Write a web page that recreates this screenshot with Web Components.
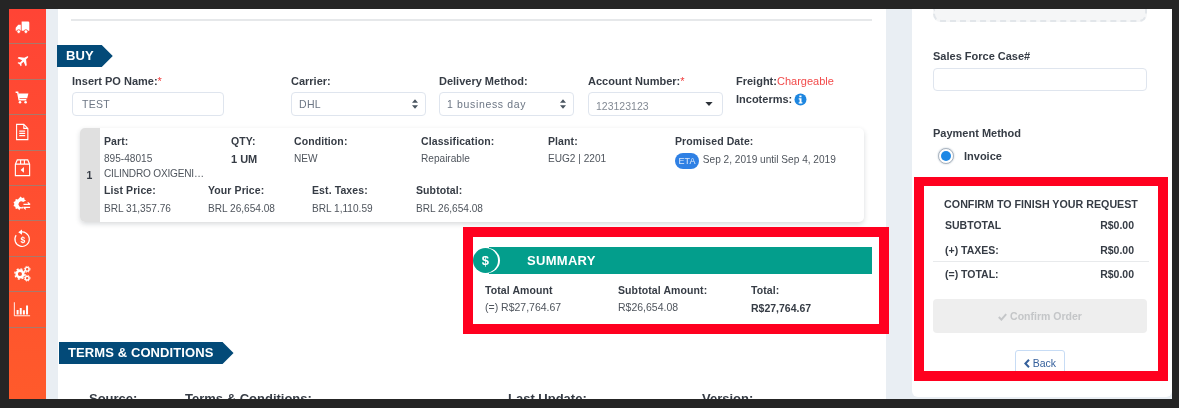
<!DOCTYPE html>
<html lang="en">
<head>
<meta charset="utf-8">
<title>Buy</title>
<style>
  html, body { margin: 0; height: 408px; overflow: hidden; background: #252525; }
  body { font: 11px "Liberation Sans", Arial, sans-serif; color: #363c45; }
</style>
</head>
<body>
<order-app>
  <nav-rail slot="rail"></nav-rail>
  <div slot="main">
    <section-ribbon style="--ribbon-top:24px;--ribbon-left:-14px;--ribbon-pad:19px">BUY</section-ribbon>
    <buy-form></buy-form>
    <part-card></part-card>
    <summary-box></summary-box>
    <section-ribbon style="--ribbon-top:8px;--ribbon-left:-12px;--ribbon-pad:20px">TERMS &amp; CONDITIONS</section-ribbon>
    <terms-table></terms-table>
  </div>
  <order-aside slot="aside"></order-aside>
</order-app>

<script>
class OrderApp extends HTMLElement {
  constructor() {
    super();
    this.attachShadow({ mode: 'open' }).innerHTML = `
      <style>
        :host { display: block; margin: 9px 7px 0 9px; height: 390px; overflow: hidden; background: #e9eef3; filter: blur(.35px); }
        .shell { display: flex; height: 100%; }
        .rail { flex: 0 0 37px; }
        .main { flex: 0 0 815px; min-width: 0; margin-left: 12px; padding-left: 13px; background: #fff; }
        .rule { width: 801px; height: 2px; margin-top: 10px; background: #e6e8ea; }
        .aside { flex: 1; margin-left: 26px; margin-bottom: 2px; background: #fff; border-radius: 0 0 6px 6px; }
      </style>
      <div class="shell">
        <div class="rail"><slot name="rail"></slot></div>
        <div class="main"><div class="rule"></div><slot name="main"></slot></div>
        <div class="aside"><slot name="aside"></slot></div>
      </div>`;
  }
}

const RAIL_ICONS = [
  // truck, cab on the left
  { size: 17, d: '<g transform="matrix(-1 0 0 1 20 0)"><path fill="#fff" d="M2 5.500A1.500 1.500 0 0 1 3.500 4H11v11H2zM12 8h3l3 3.500V15h-6z"/><circle cx="6" cy="16" r="2.200" fill="#fff" stroke="#ff4733"/><circle cx="14.500" cy="16" r="2.200" fill="#fff" stroke="#ff4733"/></g>' },
  // plane
  { size: 14, d: '<path fill="#fff" d="M17 2.200c1-.9 2.300-.6 1.800.8-.3.8-1 1.500-3 3.500l1 8-1.600 1.600-2.900-6.600-3.200 3.100.3 2.400-1.200 1.200-1.600-3-3-1.600 1.200-1.200 2.400.3 3.100-3.200-6.600-2.900L5.300 2.800l8 1z"/>' },
  // cart
  { size: 16, d: '<path fill="none" stroke="#fff" stroke-width="1.800" d="M2 4h2.600l1.800 9.500h9"/><path fill="#fff" d="M5.500 5.500H18l-1.500 6H6.500z"/><circle cx="7.500" cy="16.500" r="1.600" fill="#fff"/><circle cx="14.500" cy="16.500" r="1.600" fill="#fff"/>' },
  // document
  { size: 18, d: '<path fill="none" stroke="#fff" stroke-width="1.200" d="M4 1.500h8l4.500 4.500v12.500H4zM12 1.500V6h4.500"/><path stroke="#fff" stroke-width="1.200" d="M7 9h6.500M7 11.500h6.500M7 14h6.500"/>' },
  // box with return arrow
  { size: 19, d: '<path fill="none" stroke="#fff" stroke-width="1.200" d="M2.500 6.500 4.500 2h11l2 4.500v12h-15zM2.500 6.500h15M8 2v4.500M12 2v4.500"/><path fill="#fff" d="M11.500 9.500v6L8 12.500z"/>' },
  // gear with swap arrows
  { size: 19, d: '<path fill="#fff" d="M8 2.500l1.500 1.700 2.200-.4.500 2.200 1.500.9-3 1.600a3 3 0 1 0 0 4.600l-.6 2.400-2.100-.4L6.600 17l-1.500-1.700-2.200.4-.5-2.200L.5 12.500l1-2-1-2 1.900-1 .5-2.200 2.200.4z"/><path fill="none" stroke="#fff" stroke-width="1.300" d="M11 11h7M15.500 8.800 18 11M18 14h-7M13.500 16.200 11 14"/>' },
  // refresh dollar
  { size: 19, d: '<path fill="none" stroke="#fff" stroke-width="1.200" d="M7 3.600A7.600 7.600 0 1 1 3.300 6.500"/><path fill="#fff" d="M9.500.5v5.500L5.500 3.500z"/><text x="10.500" y="14.500" fill="#fff" font-size="9" font-weight="700" text-anchor="middle" font-family="Liberation Sans">$</text>' },
  // gears
  { size: 17, d: '<circle cx="7" cy="10.500" r="3.900" fill="none" stroke="#fff" stroke-width="3"/><circle cx="7" cy="10.500" r="6" fill="none" stroke="#fff" stroke-width="1.600" stroke-dasharray="2.400 2.300"/><circle cx="15.500" cy="5" r="2.200" fill="none" stroke="#fff" stroke-width="1.600"/><circle cx="15.500" cy="5" r="3.400" fill="none" stroke="#fff" stroke-width="1.100" stroke-dasharray="1.500 1.200"/><circle cx="15.500" cy="15.500" r="2.200" fill="none" stroke="#fff" stroke-width="1.600"/><circle cx="15.500" cy="15.500" r="3.400" fill="none" stroke="#fff" stroke-width="1.100" stroke-dasharray="1.500 1.200"/>' },
  // bar chart
  { size: 18, d: '<path fill="none" stroke="#fff" stroke-width="1" d="M1.500 2.500v15h17.500"/><path fill="#fff" d="M4 11h2.200v5H4zM7.500 9h2.200v7H7.500zM11 11.500h2.200V16H11zM14.500 6h2.200v10h-2.200z"/>' }
];

class NavRail extends HTMLElement {
  constructor() {
    super();
    const items = RAIL_ICONS.map(icon => `<div class="item"><svg width="${icon.size}" height="${icon.size}" viewBox="0 0 20 20">${icon.d}</svg></div>`).join('');
    this.attachShadow({ mode: 'open' }).innerHTML = `
      <style>
        :host { display: block; height: 390px; overflow: hidden; background: linear-gradient(#ff4435, #ff5a2b); }
        .item { display: flex; align-items: center; justify-content: center; height: 34.4px; border-bottom: 1px solid #a9796b; padding-right: 11px; }
        .item:first-child { height: 29.5px; }
      </style>
      ${items}`;
  }
}

class SectionRibbon extends HTMLElement {
  constructor() {
    super();
    this.attachShadow({ mode: 'open' }).innerHTML = `
      <style>
        :host { display: block; width: fit-content; margin: var(--ribbon-top, 0) 0 0 var(--ribbon-left, 0); }
        .tag {
          height: 22px; padding: 0 var(--ribbon-pad, 19px) 0 9px;
          font: 700 13px/22px "Liberation Sans", Arial, sans-serif; letter-spacing: .1px; color: #fff;
          background: #034a78;
          clip-path: polygon(0 0, calc(100% - 11px) 0, 100% 50%, calc(100% - 11px) 100%, 0 100%);
        }
      </style>
      <div class="tag"><slot></slot></div>`;
  }
}

class FormField extends HTMLElement {
  constructor() {
    super();
    const required = this.hasAttribute('required') ? '<i>*</i>' : '';
    const arrow = {
      select: '<svg class="arrow" width="6" height="10" viewBox="0 0 7 11"><path fill="#4a5560" d="M3.500 0 7 4H0zM3.500 11 0 7h7z"/></svg>',
      combo: '<svg class="arrow combo" width="8" height="4" viewBox="0 0 9 5"><path fill="#2c3138" d="M0 0h9L4.500 5z"/></svg>'
    }[this.getAttribute('kind')] || '';
    this.attachShadow({ mode: 'open' }).innerHTML = `
      <style>
        :host { display: block; }
        .label { font-weight: 700; font-size: 11px; line-height: 13px; }
        i { color: #f03b3b; font-style: normal; font-weight: 400; }
        .box {
          display: flex; align-items: center; justify-content: space-between; box-sizing: border-box;
          width: var(--field-width, 135px); height: 24px; margin-top: 4px; padding: 0 7px;
          background: #fff; border: 1px solid #dfe5ee; border-radius: 4px;
          color: #6c7684; font-size: 10.5px; letter-spacing: var(--field-spacing, .3px);
        }
        .combo { margin-right: 2px; }
        :host([kind="combo"]) .text { position: relative; top: 2px; color: #838a94; }
        :host([kind="text"]) .box { padding-left: 9px; }
      </style>
      <div class="label">${this.getAttribute('label')}${required}</div>
      <div class="box"><span class="text"><slot></slot></span>${arrow}</div>`;
  }
}

class BuyForm extends HTMLElement {
  constructor() {
    super();
    this.attachShadow({ mode: 'open' }).innerHTML = `
      <style>
        :host { display: grid; grid-template-columns: 219px 148px 149px 148px 1fr; margin: 8px 0 0 1px; height: 48px; }
        .freight { line-height: 13px; font-weight: 700; font-size: 11px; }
        .freight span { color: #f24a4a; font-weight: 400; }
        .inco { display: flex; align-items: center; gap: 2px; margin-top: 5px; }
      </style>
      <form-field label="Insert PO Name:" required kind="text" style="--field-width:152px">TEST</form-field>
      <form-field label="Carrier:" kind="select">DHL</form-field>
      <form-field label="Delivery Method:" kind="select" style="--field-spacing:.65px">1 business day</form-field>
      <form-field label="Account Number:" required kind="combo" style="--field-spacing:0">123123123</form-field>
      <div class="freight">
        <div>Freight:<span>Chargeable</span></div>
        <div class="inco">Incoterms:<svg width="13" height="13" viewBox="0 0 13 13"><circle cx="6.500" cy="6.500" r="6" fill="#1d86e0"/><path fill="#fff" d="M5.300 2.400h2.200v1.800H5.300zM4.700 5.300h2.800v3.900h.9v1.300H4.700V9.200h.9V6.600h-.9z"/></svg></div>
      </div>`;
  }
}

class PartCard extends HTMLElement {
  constructor() {
    super();
    this.attachShadow({ mode: 'open' }).innerHTML = `
      <style>
        :host {
          display: flex; width: 784px; height: 94px; margin: 5px 0 0 9px;
          background: #fff; border-radius: 5px; box-shadow: 0 2px 5px rgba(40,50,60,.18);
          font-size: 10.1px; line-height: 13px; color: #4f555d;
        }
        .index { flex: 0 0 20px; display: flex; align-items: center; justify-content: center; padding-right: 1px; box-sizing: border-box; background: #e0e0e0; border-radius: 5px 0 0 5px; font-weight: 700; font-size: 10.5px; color: #363c45; }
        .body { flex: 1; padding: 7px 0 0 4px; }
        .row { display: grid; }
        .top { grid-template-columns: 127px 63px 127px 127px 127px 1fr; height: 49px; }
        .bottom { grid-template-columns: repeat(4, 104px); }
        .bottom b { margin-bottom: 5px; }
        b { display: block; margin-bottom: 4px; font-size: 10.5px; color: #363c45; letter-spacing: .1px; }
        .qty { font-weight: 700; color: #363c45; position: relative; top: 1px; font-size: 11px; }
        .clip { display: block; margin-top: 2px; letter-spacing: -.2px; }
        .eta { display: inline-block; width: 24px; height: 16px; margin-right: 1px; position: relative; top: 1px; border-radius: 8px; background: #2f80e4; color: #dce9fb; font-size: 9px; line-height: 16px; text-align: center; }
      </style>
      <div class="index">1</div>
      <div class="body">
        <div class="row top">
          <div><b>Part:</b>895-48015<span class="clip">CILINDRO OXIGENI…</span></div>
          <div><b>QTY:</b><span class="qty">1 UM</span></div>
          <div><b>Condition:</b>NEW</div>
          <div><b>Classification:</b>Repairable</div>
          <div><b>Plant:</b>EUG2 | 2201</div>
          <div><b>Promised Date:</b><span class="eta">ETA</span> Sep 2, 2019 until Sep 4, 2019</div>
        </div>
        <div class="row bottom">
          <div><b>List Price:</b>BRL 31,357.76</div>
          <div><b>Your Price:</b>BRL 26,654.08</div>
          <div><b>Est. Taxes:</b>BRL 1,110.59</div>
          <div><b>Subtotal:</b>BRL 26,654.08</div>
        </div>
      </div>`;
  }
}

class SummaryBox extends HTMLElement {
  constructor() {
    super();
    this.attachShadow({ mode: 'open' }).innerHTML = `
      <style>
        :host { display: block; box-sizing: border-box; width: 426px; height: 107px; margin: 5px 0 0 392px; border: 10px solid #ff001f; background: #fff; font-size: 10.5px; line-height: 13px; color: #4f555d; }
        .bar { display: flex; align-items: center; height: 27px; margin: 10px 7px 0 16px; padding-left: 38px; position: relative; background: #039e8c; color: #fff; font-weight: 700; font-size: 13px; letter-spacing: .3px; }
        .coin { position: absolute; left: -16px; top: 1px; width: 25px; height: 25px; border-radius: 50%; background: #039e8c; box-shadow: 2px 0 0 0 #fff; display: flex; align-items: center; justify-content: center; font: 700 13px "Liberation Sans", Arial, sans-serif; }
        .cols { display: grid; grid-template-columns: repeat(3, 133px); margin: 10px 0 0 12px; }
        b { display: block; margin-bottom: 4px; color: #363c45; letter-spacing: .1px; }
        .total { font-weight: 700; color: #363c45; position: relative; top: 1px; }
      </style>
      <div class="bar"><span class="coin">$</span>SUMMARY</div>
      <div class="cols">
        <div><b>Total Amount</b>(=) R$27,764.67</div>
        <div><b>Subtotal Amount:</b>R$26,654.08</div>
        <div><b>Total:</b><span class="total">R$27,764.67</span></div>
      </div>`;
  }
}

class TermsTable extends HTMLElement {
  constructor() {
    super();
    this.attachShadow({ mode: 'open' }).innerHTML = `
      <style>
        :host { display: grid; grid-template-columns: 96px 323px 194px 1fr; margin: 27px 0 0 18px; font: 700 13px/15px "Liberation Sans", Arial, sans-serif; color: #363c45; }
      </style>
      <div>Source:</div><div>Terms &amp; Conditions:</div><div>Last Update:</div><div>Version:</div>`;
  }
}

class OrderAside extends HTMLElement {
  constructor() {
    super();
    this.attachShadow({ mode: 'open' }).innerHTML = `
      <style>
        :host { display: block; height: 388px; font-size: 11px; color: #363c45; }
        .dash { box-sizing: border-box; width: 214px; height: 13px; margin-left: 21px; background: #f5f6f7; border: 2px dashed #e2e6ea; border-top: 0; border-radius: 0 0 8px 8px; }
        .label { font-weight: 700; line-height: 13px; margin-left: 21px; }
        input { display: block; box-sizing: border-box; width: 214px; height: 23px; margin: 5px 0 0 21px; border: 1px solid #dfe5ee; border-radius: 4px; background: #fff; }
        .radio { display: flex; align-items: center; gap: 10px; margin: 8px 0 0 26px; font-weight: 700; line-height: 14px; }
        .dot { width: 16px; height: 16px; box-sizing: border-box; border: 1px solid #a9b4c0; border-radius: 50%; background: #fff; display: flex; align-items: center; justify-content: center; box-shadow: 0 0 2px #b8c2cc; }
        .dot::after { content: ""; width: 10px; height: 10px; border-radius: 50%; background: #1e88e5; }
      </style>
      <div class="dash"></div>
      <div class="label" style="margin-top:28px">Sales Force Case#</div>
      <input type="text" aria-label="Sales Force Case">
      <div class="label" style="margin-top:36px">Payment Method</div>
      <div class="radio"><span class="dot"></span>Invoice</div>
      <confirm-box></confirm-box>`;
  }
}

class ConfirmBox extends HTMLElement {
  constructor() {
    super();
    this.attachShadow({ mode: 'open' }).innerHTML = `
      <style>
        :host { display: block; box-sizing: border-box; width: 254px; height: 204px; margin: 13px 0 0 2px; border: 10px solid #ff001f; border-top-width: 9px; background: #fff; overflow: hidden; }
        h2 { margin: 12px 0 0; font-size: 10.7px; line-height: 13px; font-weight: 700; text-align: center; color: #363c45; }
        .line { display: flex; justify-content: space-between; padding: 0 15px 0 12px; margin: 0 9px; font-weight: 700; line-height: 13px; font-size: 10.5px; }
        .line.total { border-top: 1px solid #e8eaec; padding-top: 6px; margin-top: 4px; }
        button { display: block; box-sizing: border-box; font: inherit; }
        .confirm { width: 214px; height: 34px; margin: 18px 0 0 9px; border: 0; border-radius: 4px; background: #eeeeee; color: #c4c6c8; font-weight: 700; font-size: 10.5px; }
        .confirm svg { vertical-align: -1px; }
        .back { width: 50px; height: 26px; margin: 17px 0 0 91px; padding: 0; border: 1px solid #c7dcf5; border-radius: 3px; background: #fff; color: #35609c; font-size: 10.5px; }
        .back svg { vertical-align: -1px; }
      </style>
      <h2>CONFIRM TO FINISH YOUR REQUEST</h2>
      <div class="line" style="margin-top:8px"><span>SUBTOTAL</span><span>R$0.00</span></div>
      <div class="line" style="margin-top:12px"><span>(+) TAXES:</span><span>R$0.00</span></div>
      <div class="line total"><span>(=) TOTAL:</span><span>R$0.00</span></div>
      <button class="confirm" disabled><svg width="9" height="8" viewBox="0 0 9 8"><path fill="none" stroke="#c4c6c8" stroke-width="2" d="M.8 4l2.600 2.600L8.200 1.200"/></svg> Confirm Order</button>
      <button class="back"><svg width="6" height="9" viewBox="0 0 6 9"><path fill="none" stroke="#35609c" stroke-width="2" d="M5 .8 1.400 4.500 5 8.200"/></svg> Back</button>`;
  }
}

customElements.define('order-app', OrderApp);
customElements.define('nav-rail', NavRail);
customElements.define('section-ribbon', SectionRibbon);
customElements.define('form-field', FormField);
customElements.define('buy-form', BuyForm);
customElements.define('part-card', PartCard);
customElements.define('summary-box', SummaryBox);
customElements.define('terms-table', TermsTable);
customElements.define('order-aside', OrderAside);
customElements.define('confirm-box', ConfirmBox);
</script>
</body>
</html>
